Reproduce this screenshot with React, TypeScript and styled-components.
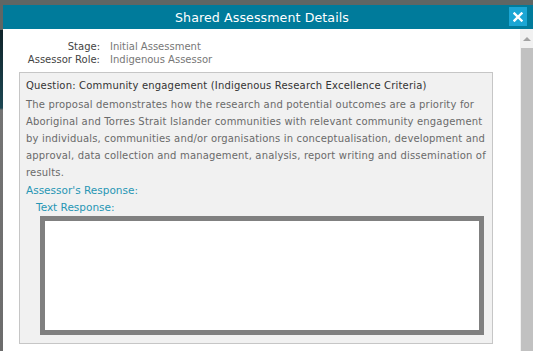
import React from 'react';
import styled, { createGlobalStyle } from 'styled-components';

const GlobalStyle = createGlobalStyle`
  html, body {
    margin: 0;
    padding: 0;
    height: 100%;
    overflow: hidden;
  }
  body {
    background: linear-gradient(
      to bottom,
      #5f6664 0px,
      #5f6664 30px,
      #0f2329 30px,
      #1d4753 108px,
      #747474 110px,
      #6c6c6c 100%
    );
    font-family: 'DejaVu Sans', 'Liberation Sans', sans-serif;
  }
`;

const Dialog = styled.div`
  margin: 5px 0 0 3px;
  width: 530px;
  height: 346px;
  background: #ffffff;
  display: flex;
  flex-direction: column;
`;

const TitleBar = styled.div`
  position: relative;
  height: 24px;
  padding-right: 12px;
  background: #007b9b;
  display: flex;
  align-items: center;
  justify-content: center;
  flex-shrink: 0;
`;

const Title = styled.h1`
  margin: 0;
  color: #ffffff;
  font-size: 12.6px;
  font-weight: 500;
  letter-spacing: 0.1px;
`;

const CloseButton = styled.button`
  position: absolute;
  right: 6px;
  top: 2px;
  width: 18px;
  height: 19px;
  padding: 0;
  border: none;
  background: #1ba6d4;
  display: flex;
  align-items: center;
  justify-content: center;
  cursor: pointer;
`;

const Body = styled.div`
  flex: 1;
  display: flex;
  min-height: 0;
`;

const Content = styled.div`
  flex: 1;
  padding: 11px 27px 0 16px;
  display: flex;
  flex-direction: column;
`;

const MetaGrid = styled.dl`
  margin: 0 0 6px 0;
  display: grid;
  grid-template-columns: 81px auto;
  column-gap: 10px;
  font-size: 10px;
  line-height: 13px;
`;

const MetaLabel = styled.dt`
  text-align: right;
  color: #444;
`;

const MetaValue = styled.dd`
  margin: 0;
  color: #777;
`;

const QuestionBox = styled.section`
  border: 1px solid #c6c6c6;
  background: #f1f1f1;
  padding: 6px 6px 8px 6px;
  display: flex;
  flex-direction: column;
`;

const QuestionTitle = styled.h2`
  margin: 0 0 3px 0;
  font-size: 10px;
  line-height: 14px;
  font-weight: 500;
  letter-spacing: 0.18px;
  color: #333;
`;

const QuestionText = styled.p`
  margin: 0;
  font-size: 10px;
  line-height: 17px;
  letter-spacing: 0.17px;
  white-space: nowrap;
  color: #6a6a6a;
`;

const ResponseLabel = styled.div<{ $indent?: number; $gap?: number }>`
  margin-top: ${(p) => p.$gap ?? 0}px;
  padding-left: ${(p) => p.$indent ?? 0}px;
  font-size: 10.5px;
  line-height: 17px;
  color: #2796b4;
`;

const ResponseArea = styled.div`
  margin: 0 2px 0 14px;
  height: 109px;
  border: 5px solid #808080;
  background: #ffffff;
`;

const Scrollbar = styled.div`
  width: 14px;
  background: #f1f1f1;
  display: flex;
  flex-direction: column;
  align-items: center;
  flex-shrink: 0;
`;

const ScrollArrow = styled.div`
  height: 19px;
  display: flex;
  align-items: center;
  justify-content: center;
  &::before {
    content: '';
    border-left: 4px solid transparent;
    border-right: 4px solid transparent;
    border-bottom: 4px solid #a3a3a3;
  }
`;

const ScrollThumb = styled.div`
  width: 12px;
  flex: 1;
  background: #c1c1c1;
`;

function App() {
  return (
    <>
      <GlobalStyle />
      <Dialog>
        <TitleBar>
          <Title>Shared Assessment Details</Title>
          <CloseButton aria-label="Close">
            <svg width="10" height="10" viewBox="0 0 10 10">
              <path d="M1.5 1.5 L8.5 8.5 M8.5 1.5 L1.5 8.5" stroke="#fff" strokeWidth="2.4" strokeLinecap="square" />
            </svg>
          </CloseButton>
        </TitleBar>
        <Body>
          <Content>
            <MetaGrid>
              <MetaLabel>Stage:</MetaLabel>
              <MetaValue>Initial Assessment</MetaValue>
              <MetaLabel>Assessor Role:</MetaLabel>
              <MetaValue>Indigenous Assessor</MetaValue>
            </MetaGrid>
            <QuestionBox>
              <QuestionTitle>Question: Community engagement (Indigenous Research Excellence Criteria)</QuestionTitle>
              <QuestionText>
                The proposal demonstrates how the research and potential outcomes are a priority for
                <br />
                Aboriginal and Torres Strait Islander communities with relevant community engagement
                <br />
                by individuals, communities and/or organisations in conceptualisation, development and
                <br />
                approval, data collection and management, analysis, report writing and dissemination of
                <br />
                results.
              </QuestionText>
              <ResponseLabel $gap={1}>Assessor's Response:</ResponseLabel>
              <ResponseLabel $indent={10}>Text Response:</ResponseLabel>
              <ResponseArea />
            </QuestionBox>
          </Content>
          <Scrollbar>
            <ScrollArrow />
            <ScrollThumb />
          </Scrollbar>
        </Body>
      </Dialog>
    </>
  );
}

export default App;
